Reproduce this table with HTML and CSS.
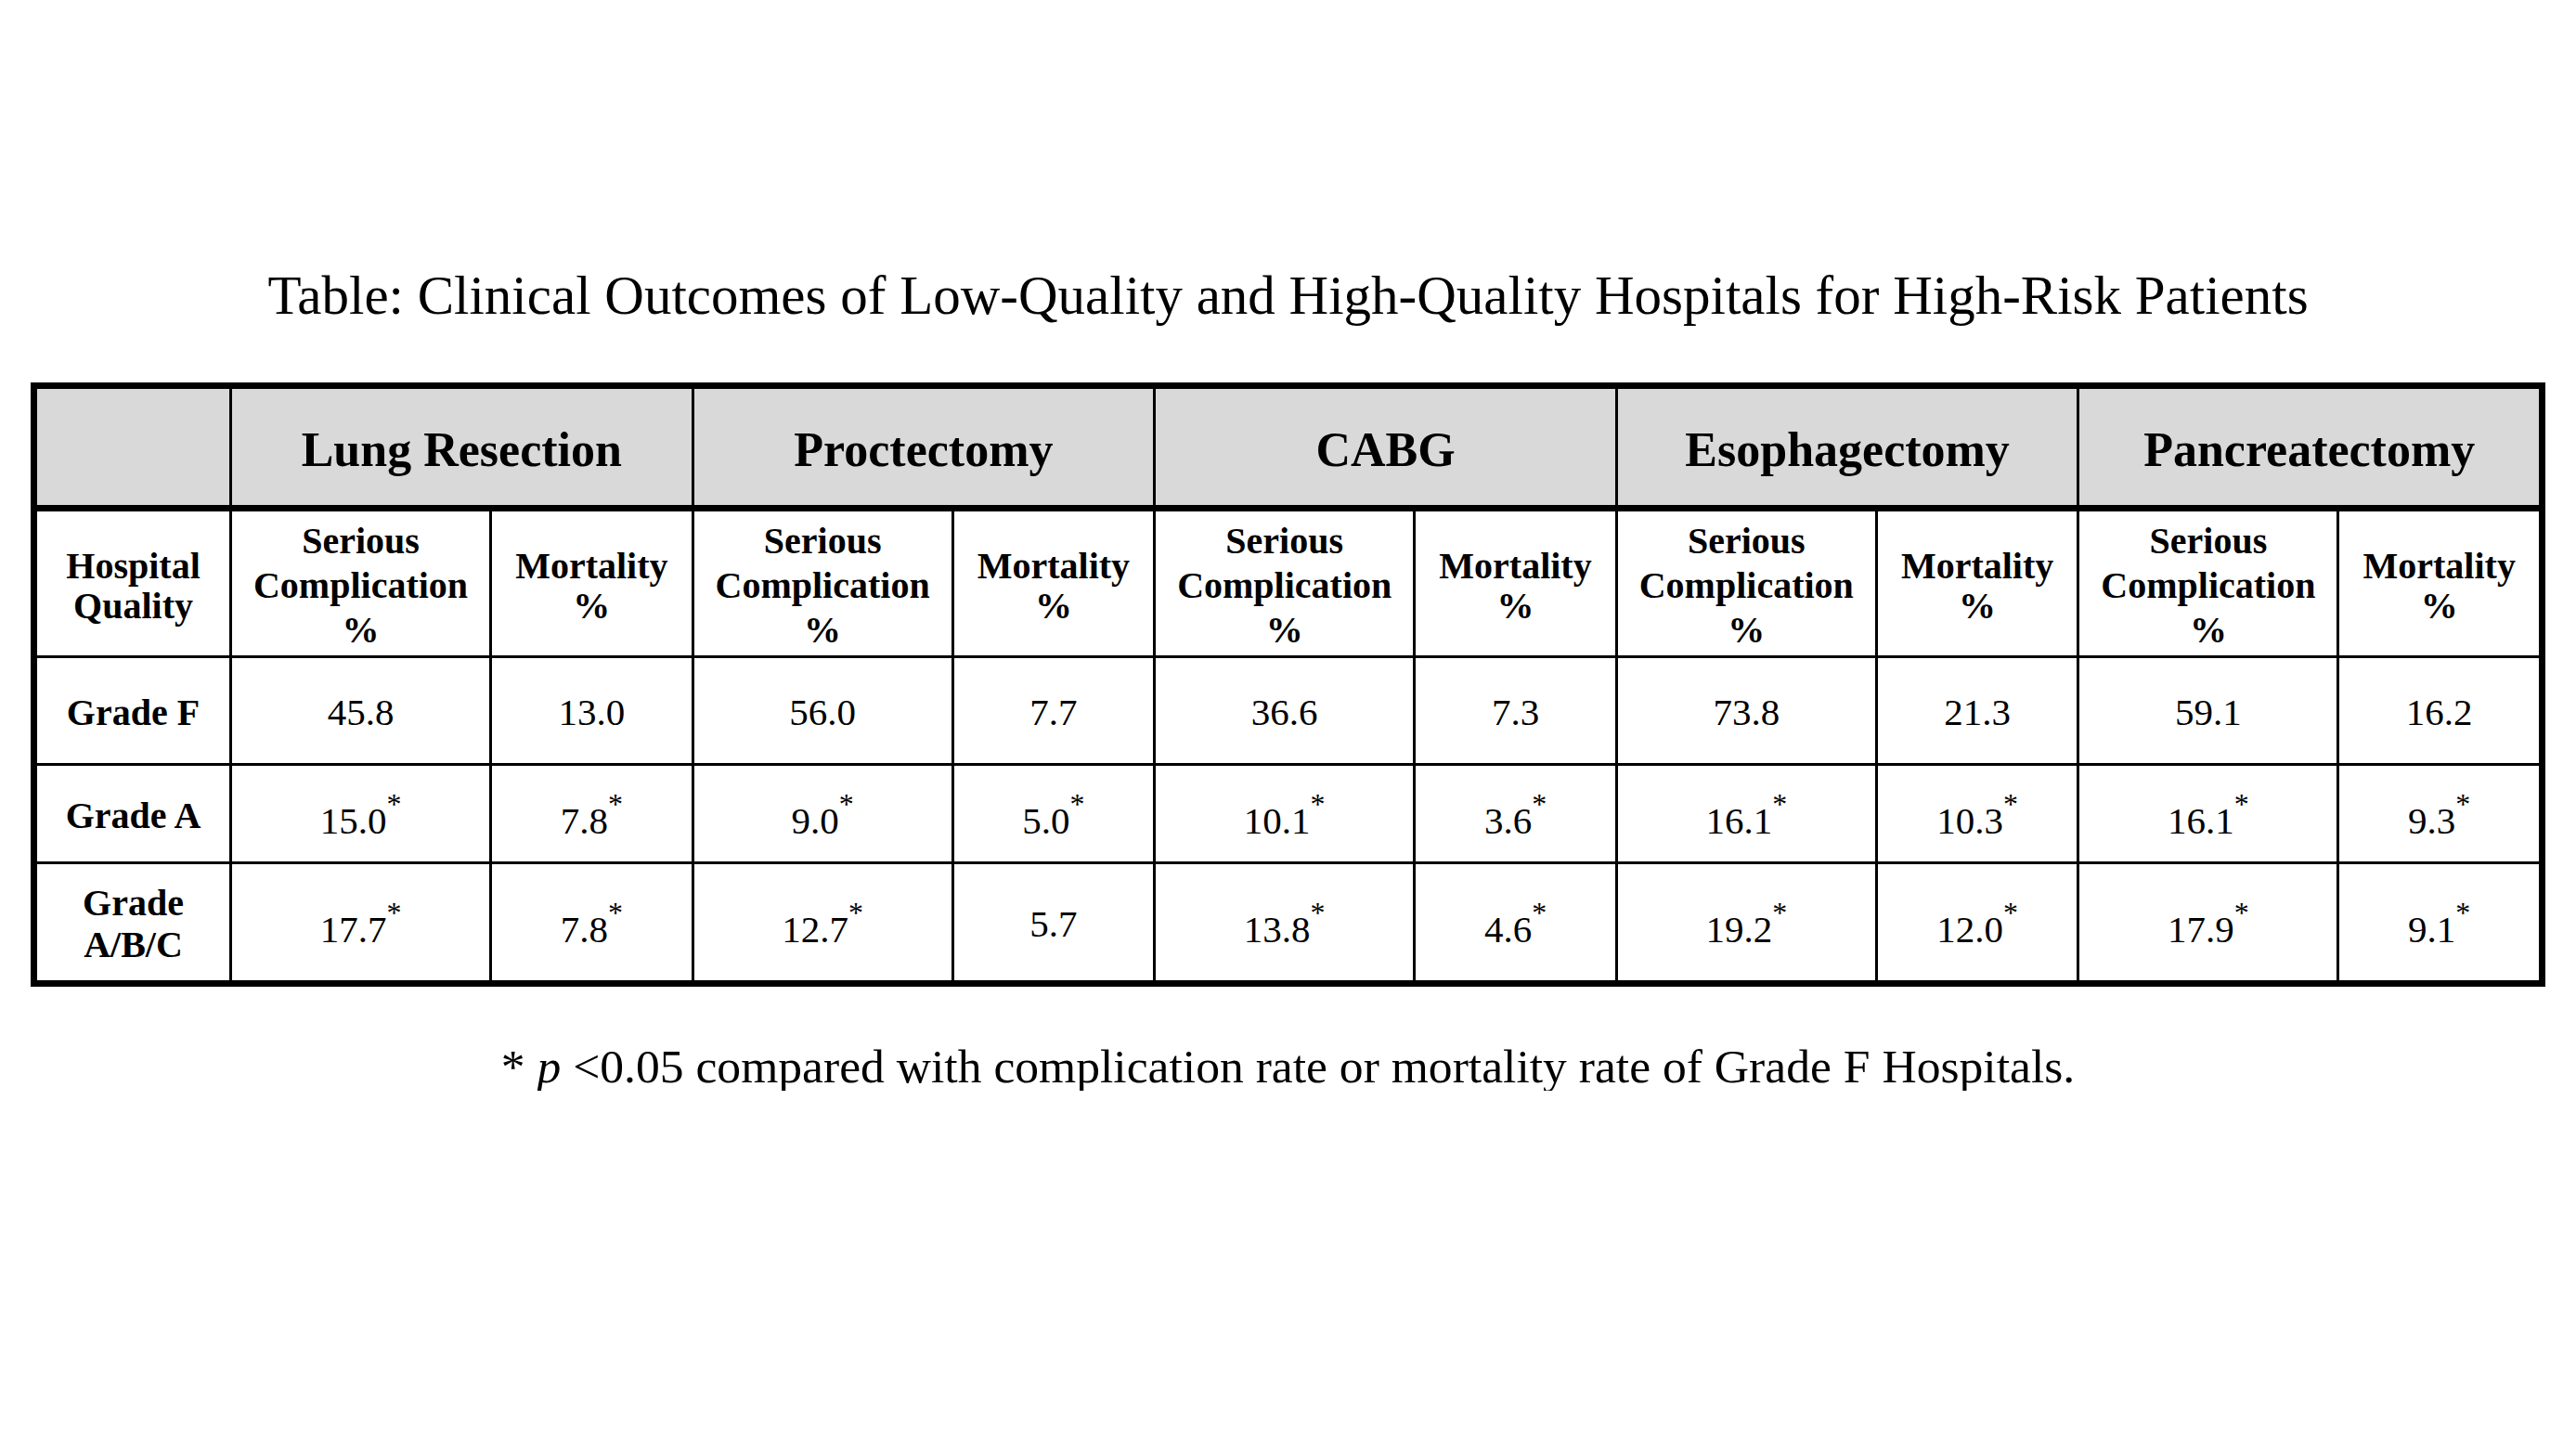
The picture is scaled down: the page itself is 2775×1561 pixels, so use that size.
FILE: index.html
```html
<!DOCTYPE html>
<html lang="en">
<head>
<meta charset="utf-8">
<title>Clinical Outcomes Table</title>
<link rel="stylesheet" href="styles.css">
</head>
<body>
<div class="page">
  <h1 class="title">Table: Clinical Outcomes of Low-Quality and High-Quality Hospitals for High-Risk Patients</h1>
  <div class="tbl">
    <div class="c hd first"></div>
    <div class="c hd span2">Lung Resection</div>
    <div class="c hd span2">Proctectomy</div>
    <div class="c hd span2">CABG</div>
    <div class="c hd span2">Esophagectomy</div>
    <div class="c hd span2">Pancreatectomy</div>

    <div class="c sub first two">Hospital<br>Quality</div>
    <div class="c sub three">Serious<br>Complication<br>%</div>
    <div class="c sub two">Mortality<br>%</div>
    <div class="c sub three">Serious<br>Complication<br>%</div>
    <div class="c sub two">Mortality<br>%</div>
    <div class="c sub three">Serious<br>Complication<br>%</div>
    <div class="c sub two">Mortality<br>%</div>
    <div class="c sub three">Serious<br>Complication<br>%</div>
    <div class="c sub two">Mortality<br>%</div>
    <div class="c sub three">Serious<br>Complication<br>%</div>
    <div class="c sub two">Mortality<br>%</div>

    <div class="c data first lbl">Grade F</div>
    <div class="c data num">45.8</div>
    <div class="c data num">13.0</div>
    <div class="c data num">56.0</div>
    <div class="c data num">7.7</div>
    <div class="c data num">36.6</div>
    <div class="c data num">7.3</div>
    <div class="c data num">73.8</div>
    <div class="c data num">21.3</div>
    <div class="c data num">59.1</div>
    <div class="c data num">16.2</div>

    <div class="c data first lbl">Grade A</div>
    <div class="c data num"><span>15.0<sup>*</sup></span></div>
    <div class="c data num"><span>7.8<sup>*</sup></span></div>
    <div class="c data num"><span>9.0<sup>*</sup></span></div>
    <div class="c data num"><span>5.0<sup>*</sup></span></div>
    <div class="c data num"><span>10.1<sup>*</sup></span></div>
    <div class="c data num"><span>3.6<sup>*</sup></span></div>
    <div class="c data num"><span>16.1<sup>*</sup></span></div>
    <div class="c data num"><span>10.3<sup>*</sup></span></div>
    <div class="c data num"><span>16.1<sup>*</sup></span></div>
    <div class="c data num"><span>9.3<sup>*</sup></span></div>

    <div class="c data first lbl">Grade<br>A/B/C</div>
    <div class="c data num"><span>17.7<sup>*</sup></span></div>
    <div class="c data num"><span>7.8<sup>*</sup></span></div>
    <div class="c data num"><span>12.7<sup>*</sup></span></div>
    <div class="c data num"><span>5.7</span></div>
    <div class="c data num"><span>13.8<sup>*</sup></span></div>
    <div class="c data num"><span>4.6<sup>*</sup></span></div>
    <div class="c data num"><span>19.2<sup>*</sup></span></div>
    <div class="c data num"><span>12.0<sup>*</sup></span></div>
    <div class="c data num"><span>17.9<sup>*</sup></span></div>
    <div class="c data num"><span>9.1<sup>*</sup></span></div>
  </div>
  <p class="note">* <i>p</i> &lt;0.05 compared with complication rate or mortality rate of Grade F Hospitals.</p>
</div>
</body>
</html>
```

FILE: styles.css
```css
html, body {
  margin: 0;
  padding: 0;
  background: #ffffff;
}

body {
  font-family: "Liberation Serif", "Times New Roman", serif;
  color: #000000;
}

.page {
  padding-top: 288px;
  display: flex;
  flex-direction: column;
  align-items: center;
}

.title {
  margin: 0;
  font-size: 59px;
  line-height: 60px;
  font-weight: normal;
  white-space: nowrap;
}

.tbl {
  margin-top: 64px;
  display: grid;
  grid-template-columns: 207px repeat(5, 280px 217.6px);
  grid-template-rows: 125px 162px 116px 106px 128px;
  border: 7px solid #000000;
}

.c {
  box-sizing: border-box;
  display: flex;
  align-items: center;
  justify-content: center;
  text-align: center;
  border-left: 3px solid #000000;
}

.c.first {
  border-left: none;
}

.span2 {
  grid-column: span 2;
}

.hd {
  background: #d9d9d9;
  font-size: 52px;
  line-height: 60px;
  font-weight: bold;
  padding-top: 6px;
}

.sub {
  border-top: 7px solid #000000;
  font-size: 40px;
  font-weight: bold;
  padding-top: 5px;
}

.sub.three {
  line-height: 48px;
}

.sub.two {
  line-height: 43px;
}

.data {
  border-top: 3px solid #000000;
  padding-top: 3px;
}

.lbl {
  font-size: 40px;
  line-height: 45px;
  font-weight: bold;
}

.num {
  font-size: 41px;
  line-height: 45px;
}

.num sup {
  font-size: 32px;
  line-height: 1;
  vertical-align: 21px;
}

.note {
  margin: 60px 0 0 0;
  font-size: 51.6px;
  line-height: 52px;
  white-space: nowrap;
}
```
